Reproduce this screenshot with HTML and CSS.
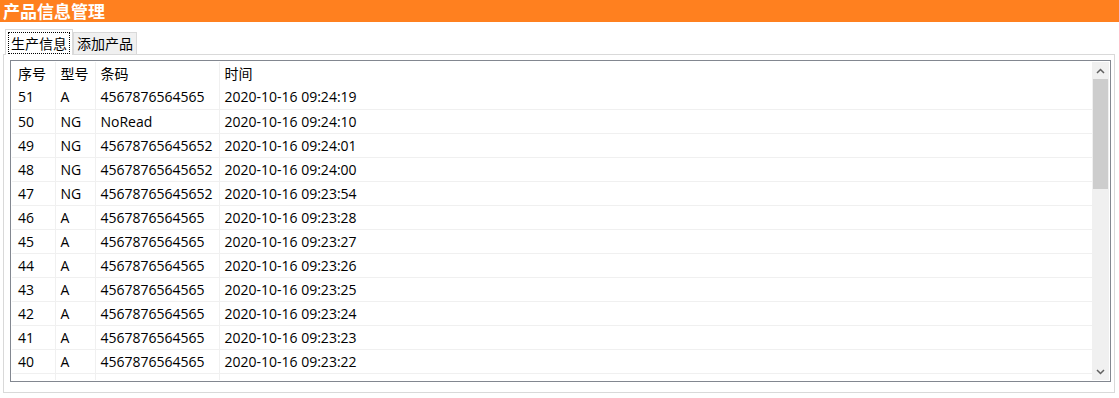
FILE: index.html
```html
<!DOCTYPE html>
<html lang="zh-CN">
<head>
  <meta charset="UTF-8" />
  <title>产品信息管理</title>
  <link rel="stylesheet" href="styles.css">
</head>
<body>

  <div class="titlebar">产品信息管理</div>

  <div class="tabs">
    <div class="tab active"><span class="focus">生产信息</span></div>
    <div class="tab">添加产品</div>
  </div>

  <div class="panel">
    <div class="listview">
      <div class="list-body">
        <table class="grid">
          <colgroup>
            <col class="c-no">
            <col class="c-type">
            <col class="c-code">
            <col>
          </colgroup>
          <thead>
            <tr><th>序号</th><th>型号</th><th>条码</th><th>时间</th></tr>
          </thead>
          <tbody>
            <tr><td>51</td><td>A</td><td>4567876564565</td><td>2020-10-16 09:24:19</td></tr>
            <tr><td>50</td><td>NG</td><td>NoRead</td><td>2020-10-16 09:24:10</td></tr>
            <tr><td>49</td><td>NG</td><td>45678765645652</td><td>2020-10-16 09:24:01</td></tr>
            <tr><td>48</td><td>NG</td><td>45678765645652</td><td>2020-10-16 09:24:00</td></tr>
            <tr><td>47</td><td>NG</td><td>45678765645652</td><td>2020-10-16 09:23:54</td></tr>
            <tr><td>46</td><td>A</td><td>4567876564565</td><td>2020-10-16 09:23:28</td></tr>
            <tr><td>45</td><td>A</td><td>4567876564565</td><td>2020-10-16 09:23:27</td></tr>
            <tr><td>44</td><td>A</td><td>4567876564565</td><td>2020-10-16 09:23:26</td></tr>
            <tr><td>43</td><td>A</td><td>4567876564565</td><td>2020-10-16 09:23:25</td></tr>
            <tr><td>42</td><td>A</td><td>4567876564565</td><td>2020-10-16 09:23:24</td></tr>
            <tr><td>41</td><td>A</td><td>4567876564565</td><td>2020-10-16 09:23:23</td></tr>
            <tr><td>40</td><td>A</td><td>4567876564565</td><td>2020-10-16 09:23:22</td></tr>
            <tr><td>39</td><td>A</td><td>4567876564565</td><td>2020-10-16 09:23:21</td></tr>
          </tbody>
        </table>
      </div>
      <div class="scrollbar">
        <div class="arrow">
          <svg width="9" height="6" viewBox="0 0 9 6"><path d="M1 5 L4.5 1.5 L8 5" fill="none" stroke="#606060" stroke-width="1.5"/></svg>
        </div>
        <div class="track"><div class="thumb"></div></div>
        <div class="arrow">
          <svg width="9" height="6" viewBox="0 0 9 6"><path d="M1 1 L4.5 4.5 L8 1" fill="none" stroke="#606060" stroke-width="1.5"/></svg>
        </div>
      </div>
    </div>
  </div>

</body>
</html>
```

FILE: styles.css
```css
* {
  box-sizing: border-box;
}

body {
  margin: 0;
  background: #ffffff;
  font-family: "Open Sans", "Noto Sans CJK SC", sans-serif;
  font-size: 14px;
  color: #000;
  width: 1119px;
  height: 398px;
  overflow: hidden;
}

.titlebar {
  height: 22px;
  background: #ff801f;
  color: #ffffff;
  font-family: "Noto Sans CJK SC", sans-serif;
  font-weight: bold;
  font-size: 17px;
  line-height: 21px;
  padding-left: 3px;
}

.tabs {
  display: flex;
  align-items: flex-end;
  height: 32px;
  padding-left: 5px;
  font-family: "Noto Sans CJK SC", sans-serif;
}

.tab {
  height: 22px;
  padding: 0 3px;
  line-height: 21px;
  background: #f0f0f0;
  border: 1px solid #d9d9d9;
  border-bottom: none;
}

.tab.active {
  height: 26px;
  background: #ffffff;
  padding: 2px 2px 0;
  line-height: 20px;
  position: relative;
  z-index: 1;
  margin-bottom: -1px;
}

.focus {
  display: block;
  padding: 0 2px;
  border: 1px dotted #000;
}

.panel {
  margin: 0 4px 0 3px;
  height: 339px;
  border: 1px solid #d9d9d9;
  padding: 5px 3px 0 6px;
}

.listview {
  display: flex;
  height: 322px;
  border: 1px solid #828790;
  padding: 1px;
}

.list-body {
  flex: 1;
  overflow: hidden;
}

.grid {
  width: 100%;
  border-collapse: collapse;
  table-layout: fixed;
}

.c-no { width: 43px; }
.c-type { width: 40px; }
.c-code { width: 124px; }

.grid th,
.grid td {
  height: 24px;
  padding: 0 0 0 5px;
  text-align: left;
  font-weight: normal;
  white-space: nowrap;
  border-right: 1px solid #f0f0f0;
  line-height: 23px;
}

.grid th {
  font-family: "Noto Sans CJK SC", sans-serif;
  height: 23px;
  padding-top: 0;
}

.grid th:first-child,
.grid td:first-child {
  padding-left: 6px;
}

.grid td {
  border-bottom: 1px solid #f0f0f0;
}

.grid th:last-child,
.grid td:last-child {
  border-right: none;
}

.scrollbar {
  width: 17px;
  display: flex;
  flex-direction: column;
  background: #f0f0f0;
}

.arrow {
  height: 17px;
  display: flex;
  align-items: center;
  justify-content: center;
}

.track {
  flex: 1;
  padding: 0 1px;
}

.thumb {
  height: 110px;
  background: #cdcdcd;
}
```
